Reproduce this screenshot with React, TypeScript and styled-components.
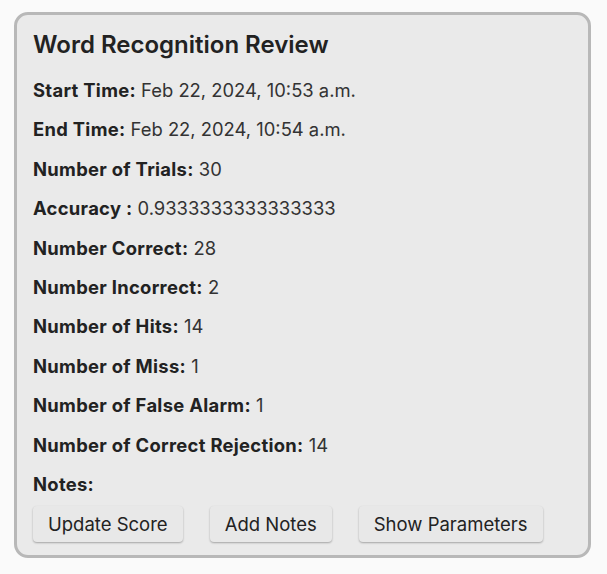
import React from "react";
import styled, { createGlobalStyle } from "styled-components";

const Global = createGlobalStyle`
  html, body { margin: 0; padding: 0; background: #fafafa; }
  body { font-family: Inter, "Noto Sans", sans-serif; color: #222; }
`;

const Page = styled.div`
  padding: 12px 16px 16px 14px;
`;

const Card = styled.div`
  width: 577px;
  height: 546px;
  box-sizing: border-box;
  border: 3px solid #b8b8b8;
  border-radius: 14px;
  background: #eaeaea;
  padding: 14px 16px 0 16px;
  display: flex;
  flex-direction: column;
`;

const Title = styled.h2`
  margin: 0;
  font-size: 24px;
  font-weight: 600;
  line-height: 32px;
  color: #222;
`;

const List = styled.div`
  margin-top: 18px;
  display: flex;
  flex-direction: column;
`;

const Row = styled.div`
  font-size: 18.4px;
  line-height: 22px;
  height: 39.4px;
  color: #333;
`;

const Label = styled.span`
  font-weight: 700;
  letter-spacing: 0.3px;
  color: #222;
`;

const Buttons = styled.div`
  display: flex;
  gap: 27px;
  margin-top: -6px;
`;

const Button = styled.button`
  font-family: Inter, "Noto Sans", sans-serif;
  font-size: 18.5px;
  color: #222;
  background: #e8e8e8;
  border: none;
  border-radius: 4px;
  height: 36px;
  padding: 0 15px;
  box-shadow: 0 1px 2px rgba(0, 0, 0, 0.3);
  cursor: pointer;
`;

const rows: [string, string][] = [
  ["Start Time:", "Feb 22, 2024, 10:53 a.m."],
  ["End Time:", "Feb 22, 2024, 10:54 a.m."],
  ["Number of Trials:", "30"],
  ["Accuracy :", "0.9333333333333333"],
  ["Number Correct:", "28"],
  ["Number Incorrect:", "2"],
  ["Number of Hits:", "14"],
  ["Number of Miss:", "1"],
  ["Number of False Alarm:", "1"],
  ["Number of Correct Rejection:", "14"],
  ["Notes:", ""],
];

export default function App() {
  return (
    <>
      <Global />
      <Page>
        <Card>
          <Title>Word Recognition Review</Title>
          <List>
            {rows.map(([l, v]) => (
              <Row key={l}>
                <Label>{l}</Label>
                {v ? ` ${v}` : ""}
              </Row>
            ))}
          </List>
          <Buttons>
            <Button>Update Score</Button>
            <Button>Add Notes</Button>
            <Button>Show Parameters</Button>
          </Buttons>
        </Card>
      </Page>
    </>
  );
}
